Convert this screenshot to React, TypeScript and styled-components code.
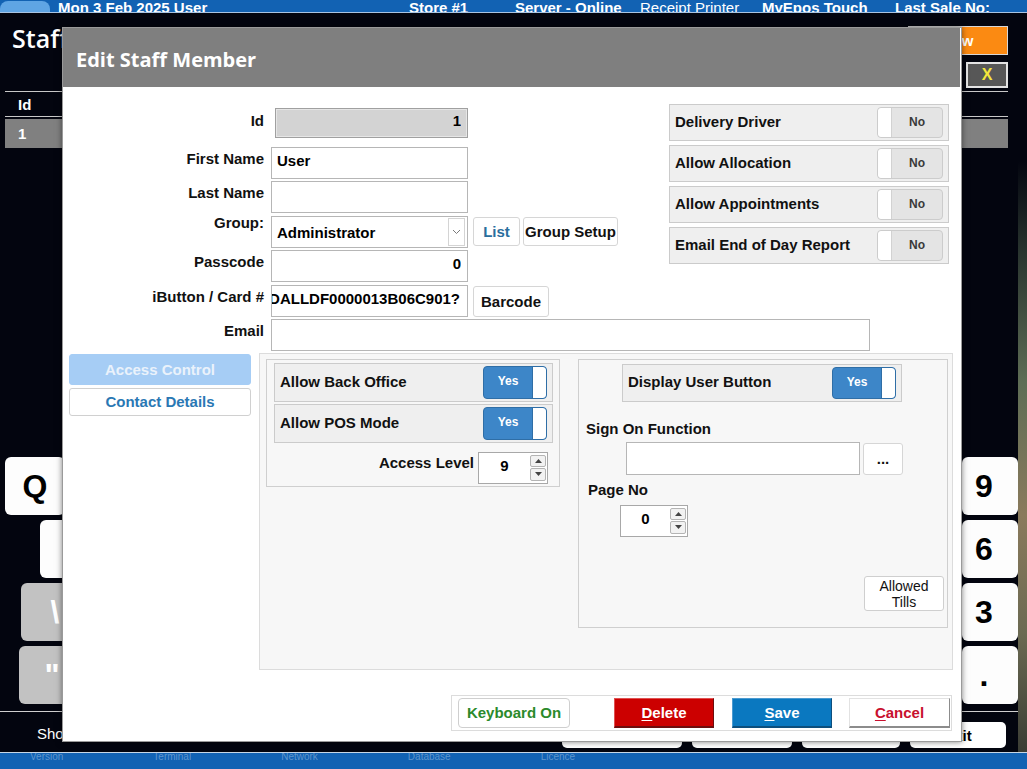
import React from 'react'
import styled, { createGlobalStyle } from 'styled-components'

const GlobalStyle = createGlobalStyle`
  html, body {
    margin: 0;
    padding: 0;
    width: 1027px;
    height: 769px;
    overflow: hidden;
    background: #03050f;
  }
  body {
    font-family: 'Liberation Sans', Arial, sans-serif;
  }
  * {
    box-sizing: border-box;
  }
`

// ---------- background application ----------

const Screen = styled.div`
  position: relative;
  width: 1027px;
  height: 769px;
  display: flex;
  flex-direction: column;
  background: #03050f;
  overflow: hidden;
`

const StatusBar = styled.div`
  height: 13px;
  flex-shrink: 0;
  background: #1262b3;
  border-bottom: 1px solid #a9c4e2;
  display: grid;
  grid-template-columns: 50px 8px 351px 106px 125px 122px 133px 1fr;
  overflow: hidden;
`

const StatusTab = styled.div`
  background: #5fa5e4;
  border-radius: 8px 8px 0 0;
  margin-top: 1px;
`

const StatusItem = styled.div<{ $light?: boolean }>`
  color: #fff;
  font-size: 15px;
  font-weight: ${(p) => (p.$light ? 400 : 700)};
  line-height: 15px;
  white-space: nowrap;
`

const Main = styled.div`
  flex: 1;
  display: flex;
`

const AppArea = styled.div`
  flex: 1;
  display: flex;
  flex-direction: column;
`

const Wallpaper = styled.div`
  width: 9px;
  background: linear-gradient(
    to bottom,
    #03050f 0%,
    #03050f 20%,
    #28332e 32%,
    #5e6d55 50%,
    #8a7a5c 68%,
    #6b6a52 84%,
    #3a3c34 100%
  );
`

const TitleRow = styled.div`
  height: 78px;
  display: flex;
  justify-content: space-between;
  padding: 0 10px 0 12px;
`

const PageTitle = styled.div`
  color: #fff;
  font-family: 'Open Sans', 'Noto Sans', sans-serif;
  font-weight: 600;
  font-size: 25px;
  margin-top: 8px;
  white-space: nowrap;
`

const HeaderActions = styled.div`
  display: flex;
  flex-direction: column;
  align-items: flex-end;
  gap: 7px;
  padding-top: 13px;
`

const NewButton = styled.div`
  width: 100px;
  height: 29px;
  background: #fb8a12;
  border: 1px solid #d7d7d7;
  color: #fff;
  font-weight: 700;
  font-size: 15px;
  display: flex;
  align-items: center;
  justify-content: center;
`

const CloseButton = styled.div`
  width: 42px;
  height: 26px;
  background: #575757;
  border: 2px solid #e4e4e4;
  color: #f3e63c;
  font-weight: 700;
  font-size: 16px;
  display: flex;
  align-items: center;
  justify-content: center;
`

const TableHeader = styled.div`
  height: 26px;
  margin: 0 10px 0 5px;
  border-top: 1px solid #c8c8c8;
  border-bottom: 1px solid #c8c8c8;
  color: #fff;
  font-weight: 700;
  font-size: 15px;
  padding-left: 13px;
  display: flex;
  align-items: center;
`

const TableRow = styled.div`
  height: 29px;
  margin: 2px 10px 0 5px;
  background: #808080;
  color: #fff;
  font-weight: 700;
  font-size: 15px;
  padding-left: 13px;
  display: flex;
  align-items: center;
`

const Spacer = styled.div`
  flex: 1;
`

const Keyboard = styled.div`
  display: flex;
  flex-direction: column;
  gap: 5px;
`

const KeyRow = styled.div`
  height: 58px;
  display: flex;
  justify-content: space-between;
`

const Key = styled.div<{ $offset?: number; $grey?: boolean; $w?: number; $pr?: number }>`
  width: ${(p) => p.$w ?? 56}px;
  margin-left: ${(p) => p.$offset ?? 0}px;
  padding-right: ${(p) => p.$pr ?? 0}px;
  background: ${(p) => (p.$grey ? '#c2c2c2' : '#fdfdfd')};
  color: ${(p) => (p.$grey ? '#fff' : '#000')};
  border-radius: 6px;
  font-weight: 700;
  font-size: 32px;
  display: flex;
  align-items: center;
  justify-content: center;
`

const AppFooter = styled.div`
  height: 41px;
  margin-top: 7px;
  border-top: 1px solid #cfcfcf;
  display: flex;
  align-items: flex-start;
`

const FooterText = styled.div`
  color: #fff;
  font-size: 15px;
  padding: 13px 0 0 37px;
  white-space: nowrap;
`

const FooterButtons = styled.div`
  margin-left: auto;
  display: flex;
  gap: 10px;
  padding: 10px 12px 0 0;
`

const FooterButton = styled.div<{ $w: number }>`
  width: ${(p) => p.$w}px;
  height: 26px;
  background: #fff;
  border-radius: 5px;
  color: #000;
  font-weight: 700;
  font-size: 15px;
  display: flex;
  align-items: center;
  justify-content: center;
`

const BottomBar = styled.div`
  height: 17px;
  flex-shrink: 0;
  border-top: 1px solid #c6d6e6;
  background: #1262b3;
  display: flex;
  gap: 90px;
  padding-left: 30px;
  overflow: hidden;
`

const BottomItem = styled.span`
  color: rgba(190, 215, 240, 0.45);
  font-size: 10px;
  line-height: 8px;
  white-space: nowrap;
`

// ---------- dialog ----------

const Dialog = styled.div`
  position: absolute;
  left: 62px;
  top: 27px;
  width: 900px;
  height: 715px;
  background: #fff;
  border: 1px solid #9a9a9a;
  box-shadow: 0 0 6px rgba(0, 0, 0, 0.5);
  display: flex;
  flex-direction: column;
`

const DialogTitle = styled.div`
  height: 59px;
  margin-right: 1px;
  background: #7f7f7f;
  color: #fff;
  font-family: 'Open Sans', 'Noto Sans', sans-serif;
  font-weight: 700;
  font-size: 20px;
  padding: 4px 0 0 13px;
  display: flex;
  align-items: center;
`

const TopGrid = styled.div`
  display: grid;
  grid-template-columns: 1fr 280px;
  padding: 17px 12px 0 0;
`

const FormColumn = styled.div`
  grid-column: 1;
  margin-top: 4px;
  display: flex;
  flex-direction: column;
  gap: 2.4px;
`

const ToggleColumn = styled.div`
  grid-column: 2;
  display: flex;
  flex-direction: column;
  gap: 4px;
`

const FormRow = styled.div<{ $h?: number; $mb?: number; $span?: boolean }>`
  height: ${(p) => p.$h ?? 32}px;
  margin-bottom: ${(p) => p.$mb ?? 0}px;
  display: flex;
  align-items: flex-start;
  ${(p) => (p.$span ? 'grid-column: 1 / -1; margin-top: 2px;' : '')}
`

const FieldLabel = styled.div<{ $top?: number }>`
  width: 201px;
  margin-right: 7px;
  margin-top: ${(p) => p.$top ?? 3}px;
  text-align: right;
  font-weight: 700;
  font-size: 15px;
  line-height: 17px;
  color: #111;
  white-space: nowrap;
`

const TextBox = styled.input<{ $w?: number; $right?: boolean; $disabled?: boolean; $indent?: number }>`
  width: ${(p) => p.$w ?? 197}px;
  height: 100%;
  margin: 0 0 0 ${(p) => p.$indent ?? 0}px;
  padding: 0 6px 5px 5px;
  border: 1px solid ${(p) => (p.$disabled ? '#a0a0a0' : '#b6b6b6')};
  box-shadow: ${(p) => (p.$disabled ? 'inset 0 0 0 1px #e6e6e6' : 'none')};
  background: ${(p) => (p.$disabled ? '#d3d3d3' : '#fff')};
  font-family: 'Liberation Sans', Arial, sans-serif;
  font-weight: 700;
  font-size: 15px;
  color: #000;
  text-align: ${(p) => (p.$right ? 'right' : 'left')};
  outline: none;
`

const ClippedBox = styled.div`
  width: 197px;
  height: 100%;
  border: 1px solid #b6b6b6;
  padding: 0 7px 5px 0;
  display: flex;
  align-items: center;
  justify-content: flex-end;
  overflow: hidden;
  white-space: nowrap;
  font-weight: 700;
  font-size: 15px;
  color: #000;
`

const Select = styled.div`
  width: 197px;
  height: 100%;
  border: 1px solid #b6b6b6;
  display: flex;
  align-items: center;
  padding: 0 2px 0 5px;
  font-weight: 700;
  font-size: 15px;
  color: #000;
`

const SelectText = styled.span`
  flex: 1;
  padding-top: 1px;
`

const ChevronBox = styled.div`
  width: 17px;
  height: 28px;
  border: 1px solid #d4d4d4;
  display: flex;
  align-items: center;
  justify-content: center;
`

const SmallButton = styled.div<{ $w: number; $color?: string; $ml?: number; $h?: number }>`
  width: ${(p) => p.$w}px;
  height: ${(p) => p.$h ?? 30}px;
  margin: 1px 0 0 ${(p) => p.$ml ?? 5}px;
  background: #fff;
  border: 1px solid #d6d6d6;
  border-radius: 3px;
  color: ${(p) => p.$color ?? '#111'};
  font-weight: 700;
  font-size: 15px;
  display: flex;
  align-items: center;
  justify-content: center;
  white-space: nowrap;
`

const ToggleRow = styled.div<{ $w?: number; $h: number; $ml?: number; $mt?: number }>`
  width: ${(p) => p.$w ?? 280}px;
  height: ${(p) => p.$h}px;
  margin: ${(p) => p.$mt ?? 0}px 0 0 ${(p) => p.$ml ?? 0}px;
  background: #efefef;
  border: 1px solid #cbcbcb;
  padding: 0 5px 2px 5px;
  display: flex;
  align-items: center;
  justify-content: space-between;
  font-weight: 700;
  font-size: 15px;
  color: #111;
  flex-shrink: 0;
`

const ToggleTrack = styled.div<{ $on: boolean; $w: number; $h: number }>`
  width: ${(p) => p.$w}px;
  height: ${(p) => p.$h}px;
  margin-top: 2px;
  border-radius: 4px;
  border: 1px solid ${(p) => (p.$on ? '#2f6ea6' : '#cccccc')};
  background: ${(p) => (p.$on ? '#3d86c8' : '#e4e4e4')};
  display: flex;
  flex-direction: ${(p) => (p.$on ? 'row' : 'row-reverse')};
  overflow: hidden;
`

const ToggleText = styled.div<{ $on: boolean }>`
  flex: 1;
  display: flex;
  align-items: center;
  justify-content: center;
  font-size: 12px;
  font-weight: 700;
  color: ${(p) => (p.$on ? '#fff' : '#3a3a3a')};
  padding-bottom: 2px;
`

const ToggleKnob = styled.div<{ $on: boolean }>`
  width: 14px;
  background: #fff;
  border-radius: ${(p) => (p.$on ? '0 3px 3px 0' : '3px 0 0 3px')};
  ${(p) => (p.$on ? 'border-left: 1px solid #2f6ea6;' : 'border-right: 1px solid #d2d2d2;')}
`

const Middle = styled.div`
  display: flex;
  gap: 8px;
  margin-top: 2px;
  padding: 0 8px 0 6px;
`

const TabList = styled.div`
  width: 182px;
  display: flex;
  flex-direction: column;
`

const Tab = styled.div<{ $active?: boolean }>`
  height: ${(p) => (p.$active ? 31 : 28)}px;
  margin-top: ${(p) => (p.$active ? 1 : 3)}px;
  background: ${(p) => (p.$active ? '#a6cdf5' : '#fff')};
  border: 1px solid ${(p) => (p.$active ? '#a6cdf5' : '#d0d0d0')};
  border-radius: 3px;
  color: ${(p) => (p.$active ? '#eaf2fb' : '#2a78b4')};
  font-weight: 700;
  font-size: 15px;
  display: flex;
  align-items: center;
  justify-content: center;
`

const Panel = styled.div`
  flex: 1;
  height: 317px;
  background: #f7f7f7;
  border: 1px solid #dcdcdc;
  padding: 5px 0 0 6px;
  display: flex;
  align-items: flex-start;
  gap: 18px;
`

const GroupBox = styled.div<{ $w: number; $h: number }>`
  width: ${(p) => p.$w}px;
  height: ${(p) => p.$h}px;
  border: 1px solid #cfcfcf;
  display: flex;
  flex-direction: column;
`

const LeftGroup = styled(GroupBox)`
  padding: 3px 6px 0 7px;
  gap: 2px;
`

const AccessRow = styled.div`
  margin: 7px 5px 0 0;
  display: flex;
  justify-content: flex-end;
  align-items: flex-start;
  gap: 4px;
`

const PlainLabel = styled.div<{ $mt?: number; $ml?: number }>`
  margin: ${(p) => p.$mt ?? 0}px 0 0 ${(p) => p.$ml ?? 0}px;
  font-weight: 700;
  font-size: 15px;
  line-height: 17px;
  color: #111;
  white-space: nowrap;
`

const Spinner = styled.div<{ $w: number; $mt?: number; $ml?: number }>`
  width: ${(p) => p.$w}px;
  height: 32px;
  margin: ${(p) => p.$mt ?? 0}px 0 0 ${(p) => p.$ml ?? 0}px;
  border: 1px solid #a8a8a8;
  background: #fff;
  display: flex;
`

const SpinValue = styled.div`
  flex: 1;
  display: flex;
  align-items: center;
  justify-content: center;
  padding-bottom: 5px;
  font-weight: 700;
  font-size: 15px;
  color: #000;
`

const Stepper = styled.div`
  width: 17px;
  padding: 2px 1px 2px 0;
  display: flex;
  flex-direction: column;
  gap: 1px;
`

const StepButton = styled.div`
  flex: 1;
  border: 1px solid #b4b4b4;
  border-radius: 2px;
  background: #f2f2f2;
  display: flex;
  align-items: center;
  justify-content: center;
`

const SignOnRow = styled.div`
  display: flex;
  gap: 3px;
  margin: 5px 0 0 47px;
`

const WideBox = styled.div`
  width: 234px;
  height: 33px;
  border: 1px solid #b6b6b6;
  background: #fff;
`

const AllowedTills = styled.div`
  align-self: flex-end;
  width: 80px;
  height: 35px;
  margin: 39px 3px 0 0;
  background: #fff;
  border: 1px solid #cfcfcf;
  border-radius: 3px;
  font-size: 14px;
  line-height: 16px;
  color: #111;
  text-align: center;
  padding-top: 1px;
`

const DialogFooter = styled.div`
  width: 501px;
  height: 36px;
  margin: 25px 0 0 388px;
  border: 1px solid #dcdcdc;
  padding: 2px 0 0 6px;
  display: flex;
  align-items: flex-start;
`

const KeyboardButton = styled.div`
  width: 112px;
  height: 30px;
  background: #fff;
  border: 1px solid #cfcfcf;
  border-radius: 4px;
  color: #2b8a2b;
  font-weight: 700;
  font-size: 15px;
  display: flex;
  align-items: center;
  justify-content: center;
`

const variants = {
  delete: { bg: '#cc0000', color: '#fff', light: '#e05050', dark: '#6e0d0d' },
  save: { bg: '#0a78c0', color: '#fff', light: '#4a9ad0', dark: '#0d4f7d' },
  cancel: { bg: '#fff', color: '#c8102e', light: '#e2e2e2', dark: '#8c8c8c' },
}

const ActionButton = styled.div<{ $variant: keyof typeof variants; $w: number; $ml: number }>`
  width: ${(p) => p.$w}px;
  height: 30px;
  margin-left: ${(p) => p.$ml}px;
  background: ${(p) => variants[p.$variant].bg};
  color: ${(p) => variants[p.$variant].color};
  border: 1px solid ${(p) => variants[p.$variant].light};
  border-right-color: ${(p) => variants[p.$variant].dark};
  border-bottom: 2px solid ${(p) => variants[p.$variant].dark};
  font-weight: 700;
  font-size: 15px;
  display: flex;
  align-items: center;
  justify-content: center;

  u {
    text-underline-offset: 2px;
  }
`

// ---------- small parts ----------

const Toggle = ({ on, w, h }: { on: boolean; w: number; h: number }) => (
  <ToggleTrack $on={on} $w={w} $h={h}>
    <ToggleText $on={on}>{on ? 'Yes' : 'No'}</ToggleText>
    <ToggleKnob $on={on} />
  </ToggleTrack>
)

const Arrow = ({ up }: { up?: boolean }) => (
  <svg width="7" height="4" viewBox="0 0 7 4">
    <polygon points={up ? '0,4 3.5,0 7,4' : '0,0 3.5,4 7,0'} fill="#444" />
  </svg>
)

const NumberSpinner = ({ value, w, mt, ml }: { value: string; w: number; mt?: number; ml?: number }) => (
  <Spinner $w={w} $mt={mt} $ml={ml}>
    <SpinValue>{value}</SpinValue>
    <Stepper>
      <StepButton>
        <Arrow up />
      </StepButton>
      <StepButton>
        <Arrow />
      </StepButton>
    </Stepper>
  </Spinner>
)

const Chevron = () => (
  <svg width="9" height="6" viewBox="0 0 9 6">
    <polyline points="1,1 4.5,4.5 8,1" fill="none" stroke="#7a7a7a" strokeWidth="1" />
  </svg>
)

const rightToggles = ['Delivery Driver', 'Allow Allocation', 'Allow Appointments', 'Email End of Day Report']

const App = () => {
  return (
    <Screen>
      <GlobalStyle />
      <StatusBar>
        <StatusTab />
        <span />
        <StatusItem>Mon 3 Feb 2025 User</StatusItem>
        <StatusItem>Store #1</StatusItem>
        <StatusItem>Server - Online</StatusItem>
        <StatusItem $light>Receipt Printer</StatusItem>
        <StatusItem>MyEpos Touch</StatusItem>
        <StatusItem>Last Sale No:</StatusItem>
      </StatusBar>

      <Main>
        <AppArea>
          <TitleRow>
            <PageTitle>Staff</PageTitle>
            <HeaderActions>
              <NewButton>New</NewButton>
              <CloseButton>X</CloseButton>
            </HeaderActions>
          </TitleRow>
          <TableHeader>Id</TableHeader>
          <TableRow>1</TableRow>
          <Spacer />
          <Keyboard>
            <KeyRow>
              <Key $offset={5} $w={60}>Q</Key>
              <Key $pr={12}>9</Key>
            </KeyRow>
            <KeyRow>
              <Key $offset={40} $w={80}>A</Key>
              <Key $pr={12}>6</Key>
            </KeyRow>
            <KeyRow>
              <Key $offset={21} $w={68} $grey>\</Key>
              <Key $pr={12}>3</Key>
            </KeyRow>
            <KeyRow>
              <Key $offset={19} $w={66} $grey>"</Key>
              <Key $pr={12}>.</Key>
            </KeyRow>
          </Keyboard>
          <AppFooter>
            <FooterText>Show Inactive</FooterText>
            <FooterButtons>
              <FooterButton $w={120}>Print</FooterButton>
              <FooterButton $w={100}>Edit</FooterButton>
              <FooterButton $w={98}>Delete</FooterButton>
              <FooterButton $w={96}>Exit</FooterButton>
            </FooterButtons>
          </AppFooter>
        </AppArea>
        <Wallpaper />
      </Main>

      <BottomBar>
        <BottomItem>Version</BottomItem>
        <BottomItem>Terminal</BottomItem>
        <BottomItem>Network</BottomItem>
        <BottomItem>Database</BottomItem>
        <BottomItem>Licence</BottomItem>
      </BottomBar>

      <Dialog>
        <DialogTitle>Edit Staff Member</DialogTitle>

        <TopGrid>
          <FormColumn>
            <FormRow $h={30} $mb={6.6}>
              <FieldLabel $top={4}>Id</FieldLabel>
              <TextBox readOnly value="1" $right $disabled $w={193} $indent={4} />
            </FormRow>
            <FormRow>
              <FieldLabel>First Name</FieldLabel>
              <TextBox readOnly value="User" />
            </FormRow>
            <FormRow>
              <FieldLabel>Last Name</FieldLabel>
              <TextBox readOnly value="" />
            </FormRow>
            <FormRow>
              <FieldLabel $top={-2}>Group:</FieldLabel>
              <Select>
                <SelectText>Administrator</SelectText>
                <ChevronBox>
                  <Chevron />
                </ChevronBox>
              </Select>
              <SmallButton $w={47} $h={29} $color="#2a6e9e">List</SmallButton>
              <SmallButton $w={95} $h={29} $ml={3}>Group Setup</SmallButton>
            </FormRow>
            <FormRow>
              <FieldLabel>Passcode</FieldLabel>
              <TextBox readOnly value="0" $right />
            </FormRow>
            <FormRow>
              <FieldLabel>iButton / Card #</FieldLabel>
              <ClippedBox>%DALLDF0000013B06C901?</ClippedBox>
              <SmallButton $w={76} $h={31}>Barcode</SmallButton>
            </FormRow>
          </FormColumn>

          <ToggleColumn>
            {rightToggles.map((label) => (
              <ToggleRow key={label} $h={37}>
                {label}
                <Toggle on={false} w={66} h={31} />
              </ToggleRow>
            ))}
          </ToggleColumn>

          <FormRow $span>
            <FieldLabel>Email</FieldLabel>
            <TextBox readOnly value="" $w={599} />
          </FormRow>
        </TopGrid>

        <Middle>
          <TabList>
            <Tab $active>Access Control</Tab>
            <Tab>Contact Details</Tab>
          </TabList>
          <Panel>
            <LeftGroup $w={294} $h={128}>
              <ToggleRow $w={279} $h={39}>
                Allow Back Office
                <Toggle on w={64} h={33} />
              </ToggleRow>
              <ToggleRow $w={279} $h={39}>
                Allow POS Mode
                <Toggle on w={64} h={33} />
              </ToggleRow>
              <AccessRow>
                <PlainLabel $mt={2}>Access Level</PlainLabel>
                <NumberSpinner value="9" w={70} />
              </AccessRow>
            </LeftGroup>

            <GroupBox $w={370} $h={269}>
              <ToggleRow $h={38} $ml={43} $mt={4}>
                Display User Button
                <Toggle on w={64} h={32} />
              </ToggleRow>
              <PlainLabel $mt={18} $ml={7}>Sign On Function</PlainLabel>
              <SignOnRow>
                <WideBox />
                <SmallButton $w={40} $h={32} $ml={0}>...</SmallButton>
              </SignOnRow>
              <PlainLabel $mt={6} $ml={9}>Page No</PlainLabel>
              <NumberSpinner value="0" w={68} mt={7} ml={41} />
              <AllowedTills>
                Allowed
                <br />
                Tills
              </AllowedTills>
            </GroupBox>
          </Panel>
        </Middle>

        <DialogFooter>
          <KeyboardButton>Keyboard On</KeyboardButton>
          <ActionButton $variant="delete" $w={100} $ml={44}>
            <u>D</u>elete
          </ActionButton>
          <ActionButton $variant="save" $w={100} $ml={18}>
            <u>S</u>ave
          </ActionButton>
          <ActionButton $variant="cancel" $w={101} $ml={17}>
            <u>C</u>ancel
          </ActionButton>
        </DialogFooter>
      </Dialog>
    </Screen>
  )
}

export default App
